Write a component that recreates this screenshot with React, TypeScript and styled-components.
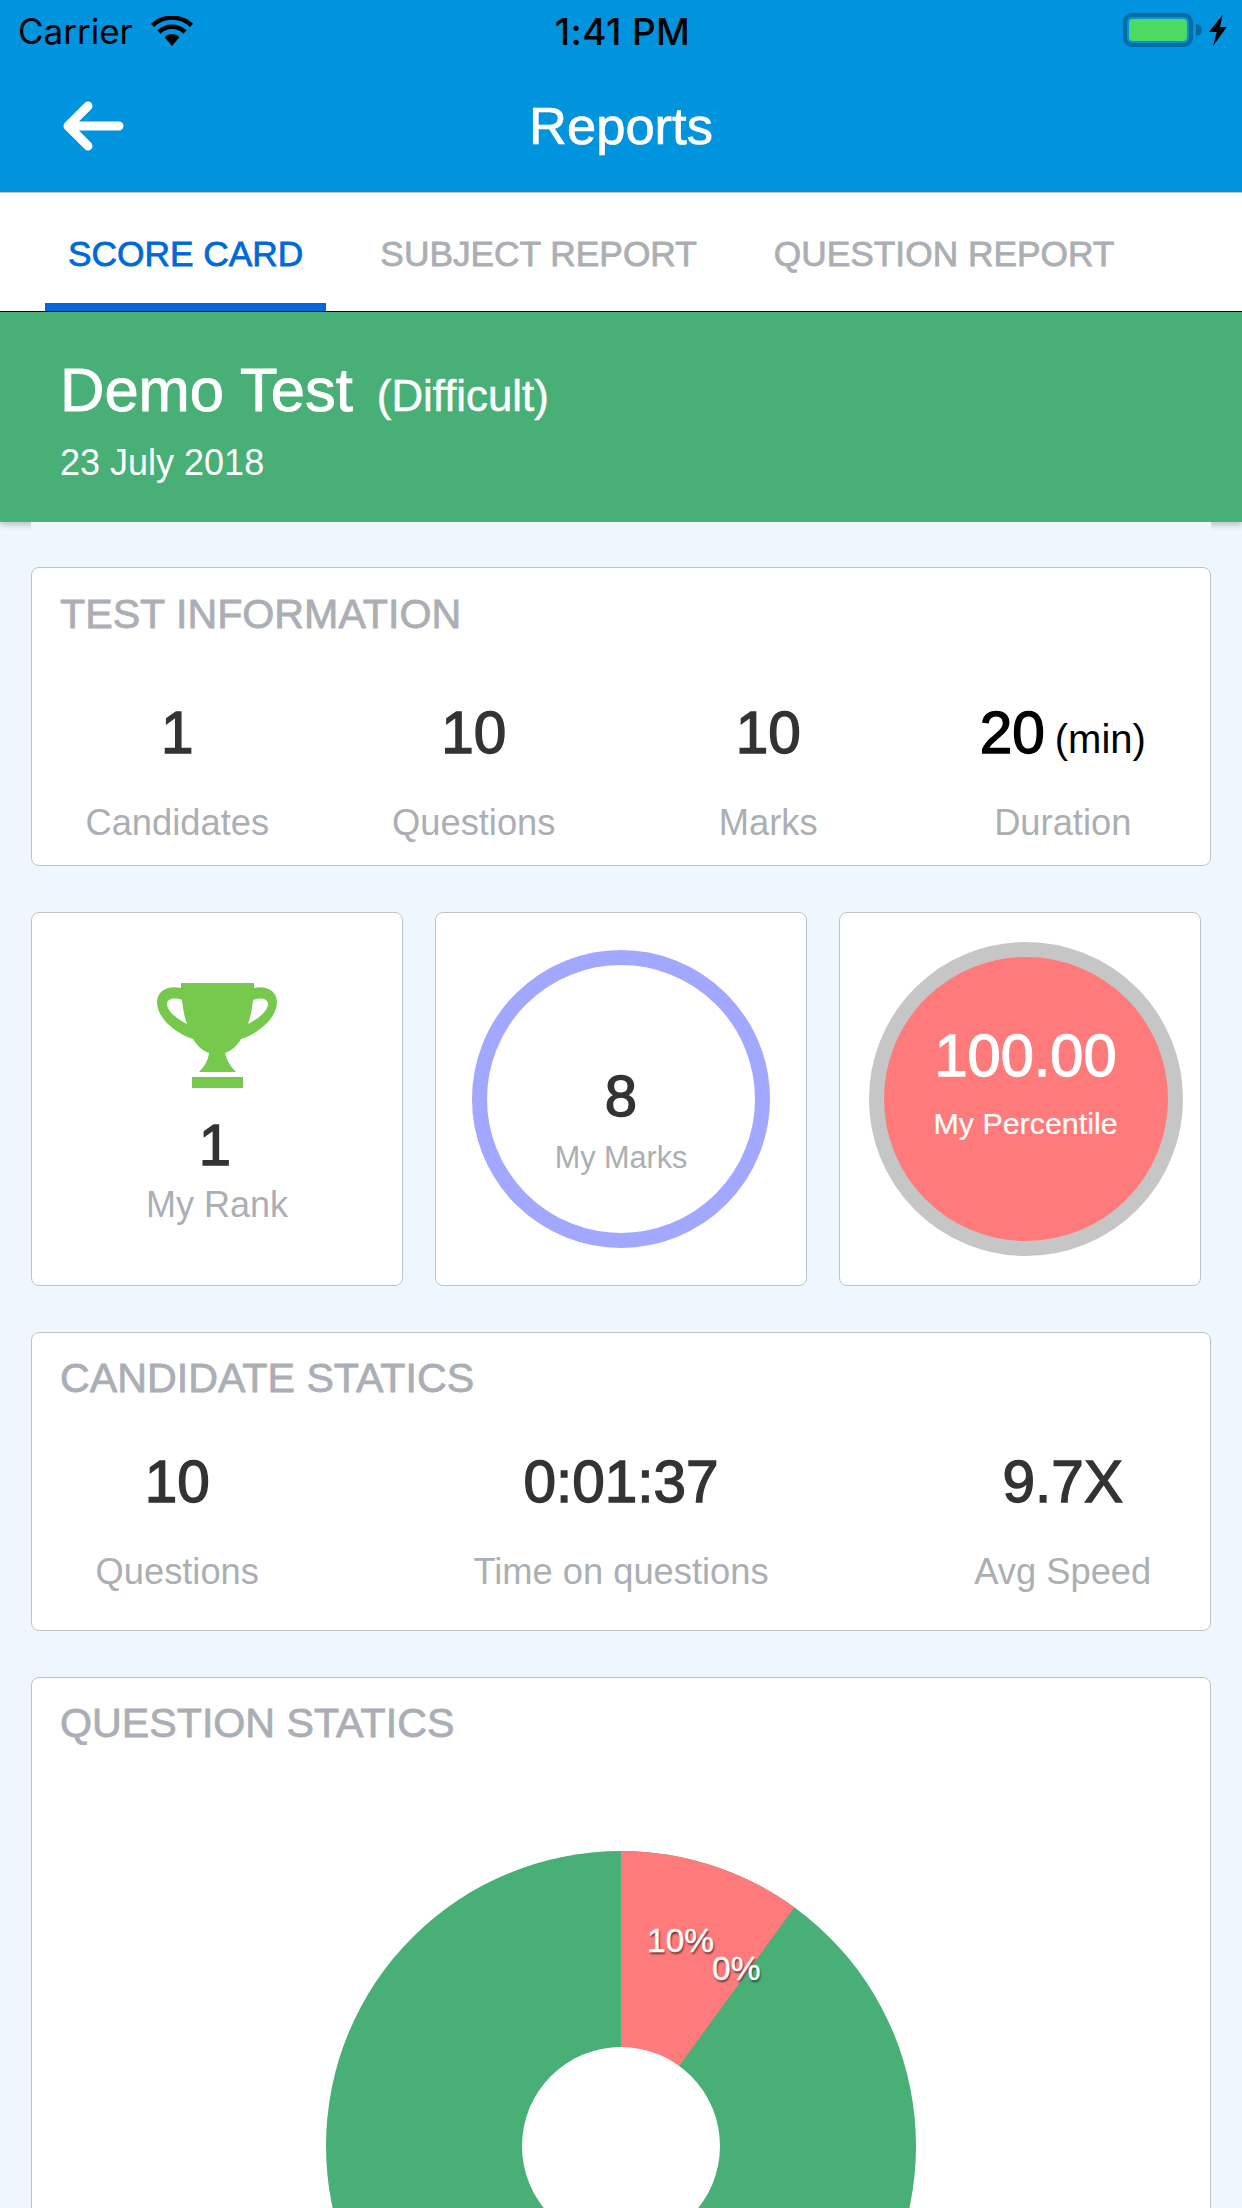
import React from 'react';
import styled, { createGlobalStyle } from 'styled-components';

const GlobalStyle = createGlobalStyle`
  html, body {
    margin: 0;
    padding: 0;
    background: #eef6fe;
  }
  * {
    box-sizing: border-box;
  }
`;

const Page = styled.div`
  width: 1242px;
  height: 2208px;
  overflow: hidden;
  background: #eef6fe;
  font-family: 'Liberation Sans', Arial, sans-serif;
`;

/* top blue area */
const Header = styled.header`
  height: 193px;
  background: #0094de;
  border-bottom: 1px solid #b9c4cb;
`;

const StatusBar = styled.div`
  height: 60px;
  display: grid;
  grid-template-columns: 1fr auto 1fr;
  align-items: center;
  padding: 2px 15px 0 18px;
  font-family: Inter, 'Liberation Sans', sans-serif;
  font-size: 35px;
  color: #000;
`;

const Carrier = styled.div`
  display: flex;
  align-items: center;
  gap: 18px;
`;

const Clock = styled.div`
  font-weight: 500;
  font-size: 37px;
  letter-spacing: 0.4px;
`;

const BatteryWrap = styled.div`
  display: flex;
  justify-content: flex-end;
  align-items: center;
  margin-top: -2px;
`;

const NavBar = styled.div`
  position: relative;
  height: 132px;
  display: flex;
  align-items: center;
  justify-content: center;
`;

const BackButton = styled.button`
  position: absolute;
  left: 62px;
  top: 41px;
  width: 62px;
  height: 50px;
  padding: 0;
  border: 0;
  background: none;
`;

const NavTitle = styled.h1`
  margin: 0;
  font-size: 52.5px;
  line-height: 60px;
  font-weight: 400;
  color: #fff;
  -webkit-text-stroke: 0.7px #fff;
`;

/* tabs */
const Tabs = styled.nav`
  height: 119px;
  display: flex;
  gap: 31px;
  padding-left: 45px;
  background: #fff;
  border-bottom: 1px solid #000;
`;

const Tab = styled.div<{ $active?: boolean }>`
  padding: 41px 23px 0;
  height: 118px;
  font-size: 35.3px;
  line-height: 40px;
  white-space: nowrap;
  color: ${(p) => (p.$active ? '#0069d9' : '#abafb3')};
  -webkit-text-stroke: 0.8px ${(p) => (p.$active ? '#0069d9' : '#abafb3')};
  border-bottom: 8px solid ${(p) => (p.$active ? '#0069d9' : 'transparent')};
`;

/* green test banner */
const Banner = styled.section`
  height: 210px;
  padding: 42px 60px 0;
  background: #48b076;
  color: #fff;
  box-shadow: 0 3px 6px rgba(0, 0, 0, 0.22);
`;

const BannerTitle = styled.div`
  display: flex;
  align-items: baseline;
  gap: 24px;
  height: 72px;
  line-height: 72px;
`;

const TestName = styled.span`
  font-size: 61.5px;
  -webkit-text-stroke: 0.9px #fff;
`;

const Level = styled.span`
  font-size: 43.8px;
  -webkit-text-stroke: 0.5px #fff;
`;

const TestDate = styled.div`
  margin-top: 15px;
  font-size: 36px;
  line-height: 44px;
`;

const Content = styled.main`
  position: relative;
  margin: 0 31px;
  padding-top: 45px;
  display: flex;
  flex-direction: column;
  gap: 46px;
  background: #eef6fe;
`;

const Card = styled.section`
  background: #fff;
  border: 1.5px solid #bfc3c7;
  border-radius: 8px;
`;

const InfoCard = styled(Card)<{ $top: number }>`
  height: 299px;
  padding: ${(p) => p.$top}px 0 0;
`;

const Heading = styled.h2`
  margin: 0;
  padding-left: 28px;
  font-size: 41.2px;
  line-height: 46px;
  font-weight: 400;
  color: #abafb5;
  -webkit-text-stroke: 0.8px #abafb5;
`;

const StatGrid = styled.div<{ $cols: string; $gap: number }>`
  display: grid;
  grid-template-columns: ${(p) => p.$cols};
  margin-top: ${(p) => p.$gap}px;
`;

const Stat = styled.div`
  text-align: center;

  &:first-child {
    padding-right: 4px;
  }
`;

const StatValue = styled.div<{ $dark?: boolean }>`
  height: 68px;
  font-size: 58.5px;
  line-height: 68px;
  color: ${(p) => (p.$dark ? '#000' : '#333')};
  -webkit-text-stroke: 1.4px ${(p) => (p.$dark ? '#000' : '#333')};
`;

const Unit = styled.span`
  margin-left: 10px;
  font-size: 40px;
  -webkit-text-stroke: 0;
`;

const StatLabel = styled.div`
  margin-top: 36px;
  font-size: 36.3px;
  line-height: 40px;
  color: #abafb3;
`;

const TileRow = styled.div`
  display: grid;
  grid-template-columns: 372px 372px 362px;
  gap: 32px;
`;

const Tile = styled(Card)`
  height: 374px;
  display: flex;
  flex-direction: column;
  align-items: center;
  justify-content: center;
`;

const RankTile = styled(Tile)`
  justify-content: flex-start;
  padding-top: 70px;
`;

const RankValue = styled.div`
  margin-top: 23px;
  margin-right: 4px;
  font-size: 58px;
  line-height: 68px;
  color: #333;
  -webkit-text-stroke: 1.4px #333;
`;

const RankLabel = styled.div`
  margin-top: 5px;
  font-size: 36px;
  line-height: 42px;
  color: #abafb3;
`;

const MarksRing = styled.div`
  width: 298px;
  height: 298px;
  border: 15px solid #a2a8ff;
  border-radius: 50%;
  display: flex;
  flex-direction: column;
  align-items: center;
  padding-top: 100px;
`;

const MarksValue = styled.div`
  font-size: 58px;
  line-height: 62px;
  color: #333;
  -webkit-text-stroke: 1.4px #333;
`;

const MarksLabel = styled.div`
  margin-top: 12px;
  font-size: 30.6px;
  line-height: 36px;
  color: #abafb3;
`;

const PercentileRing = styled.div`
  width: 314px;
  height: 314px;
  margin-left: 11px;
  border: 15px solid #c6c6c6;
  border-radius: 50%;
  background: #ff7a7a;
  display: flex;
  flex-direction: column;
  align-items: center;
  padding-top: 65px;
  color: #fff;
`;

const PercentileValue = styled.div`
  font-size: 59.5px;
  line-height: 68px;
  -webkit-text-stroke: 1.3px #fff;
`;

const PercentileLabel = styled.div`
  margin-top: 15px;
  font-size: 30.4px;
  line-height: 36px;
  -webkit-text-stroke: 0.2px #fff;
`;

const ChartCard = styled(Card)`
  height: 800px;
  padding-top: 22px;
`;

const Chart = styled.div`
  position: relative;
  width: 590px;
  height: 590px;
  margin: 105px auto 0;
`;

const SliceLabel = styled.span<{ $x: number; $y: number }>`
  position: absolute;
  left: ${(p) => p.$x}px;
  top: ${(p) => p.$y}px;
  font-size: 33.5px;
  line-height: 38px;
  color: #fff;
  -webkit-text-stroke: 0.4px #fff;
  text-shadow: 1px 2px 2px rgba(0, 0, 0, 0.6);
`;

const WifiIcon = () => (
  <svg width="42" height="30" viewBox="0 0 42 30">
    <path d="M1.5 9.5 A28 28 0 0 1 40.5 9.5" fill="none" stroke="#000" strokeWidth="4.5" />
    <path d="M8 16 A19 19 0 0 1 34 16" fill="none" stroke="#000" strokeWidth="4.5" />
    <path d="M13.5 21 L21 30 L28.5 21 A11 11 0 0 0 13.5 21 Z" fill="#000" />
  </svg>
);

const BatteryIcon = () => (
  <svg width="104" height="34" viewBox="0 0 104 34">
    <rect x="2" y="2" width="66" height="30" rx="7" fill="none" stroke="#006ba3" strokeWidth="4" />
    <rect x="6" y="6" width="58" height="22" rx="4" fill="#4cd964" />
    <path d="M73 11 A6 6 0 0 1 73 23 Z" fill="#006ba3" />
    <path d="M99.7 1.5 L86 19 L93.7 19 L90 33 L103.7 14 L97 14 Z" fill="#000" />
  </svg>
);

const BackArrow = () => (
  <svg width="62" height="50" viewBox="0 0 62 50">
    <path
      d="M26 5 L6 25 L26 45 M6 25 L57 25"
      fill="none"
      stroke="#fff"
      strokeWidth="9"
      strokeLinecap="round"
      strokeLinejoin="round"
    />
  </svg>
);

const Trophy = () => (
  <svg width="120" height="105" viewBox="0 0 120 105">
    <path
      fillRule="evenodd"
      fill="#76c94c"
      d="M24 0 H97 V5 C108 2 120 7 120 19 C120 36 100 51 84 56 C80 63 74 68 68 70 C70 78 74 84 79 89 H42 C47 84 51 78 52 70 C46 68 40 63 36 56 C20 51 0 36 0 19 C0 7 12 2 24 5 Z
         M25 17 C17 14 10 16 10 21 C10 28 20 36 30 41 C27 33 26 25 25 17 Z
         M96 17 C104 14 111 16 111 21 C111 28 101 36 91 41 C94 33 95 25 96 17 Z
         M35 94 H86 V105 H35 Z"
    />
  </svg>
);

const DonutChart = () => {
  const c = 295;
  const end = (36 * Math.PI) / 180;
  const x = c + c * Math.sin(end);
  const y = c - c * Math.cos(end);
  return (
    <Chart>
      <svg width="590" height="590" viewBox="0 0 590 590">
        <circle cx={c} cy={c} r={c} fill="#48b076" />
        <path d={`M${c} ${c} L${c} 0 A${c} ${c} 0 0 1 ${x} ${y} Z`} fill="#ff7a7a" />
        <circle cx={c} cy={c} r="99" fill="#fff" />
      </svg>
      <SliceLabel $x={321} $y={71}>10%</SliceLabel>
      <SliceLabel $x={386} $y={99}>0%</SliceLabel>
    </Chart>
  );
};

const App = () => {
  return (
    <Page>
      <GlobalStyle />
      <Header>
        <StatusBar>
          <Carrier>
            Carrier
            <WifiIcon />
          </Carrier>
          <Clock>1:41 PM</Clock>
          <BatteryWrap>
            <BatteryIcon />
          </BatteryWrap>
        </StatusBar>
        <NavBar>
          <BackButton aria-label="Back">
            <BackArrow />
          </BackButton>
          <NavTitle>Reports</NavTitle>
        </NavBar>
      </Header>

      <Tabs>
        <Tab $active>SCORE CARD</Tab>
        <Tab>SUBJECT REPORT</Tab>
        <Tab>QUESTION REPORT</Tab>
      </Tabs>

      <Banner>
        <BannerTitle>
          <TestName>Demo Test</TestName>
          <Level>(Difficult)</Level>
        </BannerTitle>
        <TestDate>23 July 2018</TestDate>
      </Banner>

      <Content>
        <InfoCard $top={23}>
          <Heading>TEST INFORMATION</Heading>
          <StatGrid $cols="repeat(4, 1fr)" $gap={62}>
            <Stat>
              <StatValue>1</StatValue>
              <StatLabel>Candidates</StatLabel>
            </Stat>
            <Stat>
              <StatValue>10</StatValue>
              <StatLabel>Questions</StatLabel>
            </Stat>
            <Stat>
              <StatValue>10</StatValue>
              <StatLabel>Marks</StatLabel>
            </Stat>
            <Stat>
              <StatValue $dark>
                20<Unit>(min)</Unit>
              </StatValue>
              <StatLabel>Duration</StatLabel>
            </Stat>
          </StatGrid>
        </InfoCard>

        <TileRow>
          <RankTile>
            <Trophy />
            <RankValue>1</RankValue>
            <RankLabel>My Rank</RankLabel>
          </RankTile>
          <Tile>
            <MarksRing>
              <MarksValue>8</MarksValue>
              <MarksLabel>My Marks</MarksLabel>
            </MarksRing>
          </Tile>
          <Tile>
            <PercentileRing>
              <PercentileValue>100.00</PercentileValue>
              <PercentileLabel>My Percentile</PercentileLabel>
            </PercentileRing>
          </Tile>
        </TileRow>

        <InfoCard $top={22}>
          <Heading>CANDIDATE STATICS</Heading>
          <StatGrid $cols="1fr 2fr 1fr" $gap={47}>
            <Stat>
              <StatValue>10</StatValue>
              <StatLabel>Questions</StatLabel>
            </Stat>
            <Stat>
              <StatValue>0:01:37</StatValue>
              <StatLabel>Time on questions</StatLabel>
            </Stat>
            <Stat>
              <StatValue>9.7X</StatValue>
              <StatLabel>Avg Speed</StatLabel>
            </Stat>
          </StatGrid>
        </InfoCard>

        <ChartCard>
          <Heading>QUESTION STATICS</Heading>
          <DonutChart />
        </ChartCard>
      </Content>
    </Page>
  );
};

export default App;
